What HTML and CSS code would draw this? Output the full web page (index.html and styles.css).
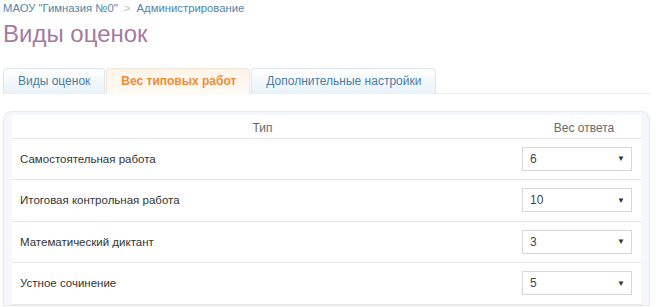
FILE: index.html
```html
<!DOCTYPE html>
<html lang="ru">
<head>
    <meta charset="UTF-8">
    <meta name="viewport" content="width=device-width, initial-scale=1.0">
    <title>Виды оценок</title>
    <link rel="stylesheet" href="styles.css">
</head>
<body>

    <div class="crumbs">
        <a href="#">МАОУ "Гимназия №0"</a>
        <span class="sep">&gt;</span>
        <a href="#">Администрирование</a>
    </div><!--crumbs-->

    <h1 class="title">Виды оценок</h1>

    <ul class="tabs">
        <li><a href="#">Виды оценок</a></li>
        <li class="active"><a href="#">Вес типовых работ</a></li>
        <li><a href="#">Дополнительные настройки</a></li>
    </ul><!--tabs-->

    <div class="panel">
        <table class="grid">
            <thead>
                <tr>
                    <th class="col-type">Тип</th>
                    <th class="col-weight">Вес ответа</th>
                </tr>
            </thead>
            <tbody>
                <tr>
                    <td>Самостоятельная работа</td>
                    <td class="cell-select"><div class="select"><span>6</span><span class="arrow">&#9660;</span></div></td>
                </tr>
                <tr>
                    <td>Итоговая контрольная работа</td>
                    <td class="cell-select"><div class="select"><span>10</span><span class="arrow">&#9660;</span></div></td>
                </tr>
                <tr>
                    <td>Математический диктант</td>
                    <td class="cell-select"><div class="select"><span>3</span><span class="arrow">&#9660;</span></div></td>
                </tr>
                <tr>
                    <td>Устное сочинение</td>
                    <td class="cell-select"><div class="select"><span>5</span><span class="arrow">&#9660;</span></div></td>
                </tr>
            </tbody>
        </table>
    </div><!--panel-->

</body>
</html>
```

FILE: styles.css
```css
*{
    margin:0;
    padding:0;
    box-sizing: border-box;
}

body{
    font-family: "Liberation Sans", Arial, sans-serif;
    background: #fff;
    padding: 0 9px 0 3px;
    height: 307px;
    overflow: hidden;
}

a{
    text-decoration: none;
}

.crumbs{
    font-size: 11.3px;
    line-height: 14px;
    padding-top: 1px;
}
.crumbs a{
    color: #4f87aa;
}
.crumbs .sep{
    color: #bcbcbc;
    margin: 0 3px;
}

.title{
    font-size: 24px;
    font-weight: normal;
    line-height: 30px;
    color: #a57a9f;
    margin-top: 4px;
}

.tabs{
    display: flex;
    list-style: none;
    gap: 1px;
    margin-top: 19px;
    border-bottom: 1px solid #e4ecf2;
    height: 26px;
}
.tabs li{
    height: 26px;
    border: 1px solid #dbe6ee;
    border-bottom: none;
    border-radius: 4px 4px 0 0;
    background: linear-gradient(#ffffff, #e8f2f9);
}
.tabs li a{
    display: block;
    padding: 0 14px;
    line-height: 24px;
    font-size: 12px;
    color: #4a7ea4;
}
.tabs li.active{
    background: linear-gradient(#fff4e8, #fffaf5);
    border-color: #f1e6da;
}
.tabs li.active a{
    color: #ea8d38;
    font-weight: bold;
    padding: 0 13px 0 14px;
}

.panel{
    margin-top: 17px;
    border: 1px solid #e2e9ef;
    border-radius: 9px 9px 0 0;
    background: #f4f7fb;
    padding: 3px 8px 0 8px;
}

.grid{
    width: 100%;
    border-collapse: collapse;
    background: #fff;
}
.grid th{
    font-size: 12px;
    font-weight: normal;
    color: #6a6a6a;
    height: 23px;
    vertical-align: bottom;
    padding-bottom: 3px;
    text-align: center;
}
.grid .col-weight{
    width: 128px;
    padding-left: 14px;
}
.grid td{
    border-top: 1px solid #e6e6e6;
    height: 41.5px;
    font-size: 11.5px;
    color: #333;
    padding-left: 8px;
}
.grid tbody tr:last-child td{
    border-bottom: 1px solid #e6e6e6;
}
.grid .cell-select{
    padding-left: 9px;
}

.select{
    width: 110px;
    height: 24px;
    border: 1px solid #d7d7d7;
    background: #fff;
    display: flex;
    justify-content: space-between;
    align-items: center;
    padding: 0 6px 0 7px;
    font-size: 12px;
    color: #444;
}
.select .arrow{
    font-size: 8px;
    color: #333;
}
```
